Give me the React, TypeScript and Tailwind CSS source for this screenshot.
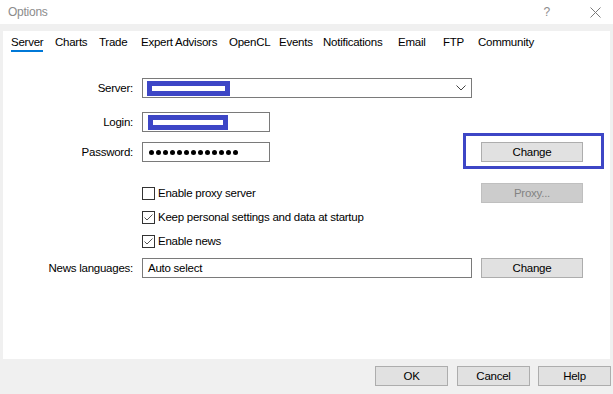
import React from "react";

const tabs = [
  { name: "Server", w: "w-[44px]" },
  { name: "Charts", w: "w-[44px]" },
  { name: "Trade", w: "w-[42px]" },
  { name: "Expert Advisors", w: "w-[88px]" },
  { name: "OpenCL", w: "w-[50px]" },
  { name: "Events", w: "w-[44px]" },
  { name: "Notifications", w: "w-[75px]" },
  { name: "Email", w: "w-[45px]" },
  { name: "FTP", w: "w-[35px]" },
  { name: "Community", w: "w-[80px]" },
];

function Scribble({ w }: { w: string }) {
  // blue redaction mark over the account fields
  return (
    <div className={`${w} h-[15px] border-[5px] border-[#3d46c6] bg-white`} />
  );
}

function Button({
  label,
  w = "w-[102px]",
  disabled = false,
}: {
  label: string;
  w?: string;
  disabled?: boolean;
}) {
  return (
    <div
      className={`${w} h-[20px] flex items-center justify-center border ${
        disabled
          ? "bg-[#cccccc] border-[#bfbfbf] text-[#838383]"
          : "bg-[#e1e1e1] border-[#adadad] text-black"
      }`}
    >
      {label}
    </div>
  );
}

function Checkbox({ checked, label }: { checked: boolean; label: string }) {
  return (
    <div className="flex items-center">
      <div className="w-[13px] h-[13px] border border-[#333333] bg-white flex items-center justify-center">
        {checked && (
          <svg width="11" height="11" viewBox="0 0 11 11">
            <polyline
              points="1.5,5.5 4,8 9.5,2.5"
              fill="none"
              stroke="#555555"
              strokeWidth="1"
            />
          </svg>
        )}
      </div>
      <span className="ml-[3px]">{label}</span>
    </div>
  );
}

export default function App() {
  return (
    <div className="w-[613px] h-[394px] bg-[#f0f0f0] flex flex-col font-['Liberation_Sans',Arial,sans-serif] text-[11.5px] tracking-[-0.25px] text-black leading-[14px] overflow-hidden">
      {/* title bar */}
      <div className="h-[24px] bg-white flex items-center pl-[8px] pr-[12px] text-[#8c8c8c] text-[12px]">
        <span>Options</span>
        <span className="ml-auto mr-[40px]">?</span>
        <svg width="11" height="11" viewBox="0 0 11 11">
          <path d="M0.5 0.5 L10.5 10.5 M10.5 0.5 L0.5 10.5" stroke="#7a7a7a" strokeWidth="1" />
        </svg>
      </div>

      {/* page */}
      <div className="mx-[3px] mt-[7px] h-[328px] bg-white flex flex-col">
        <div className="flex pl-[8px] pt-[4px]">
          {tabs.map((t, i) => (
            <div key={t.name} className={`${t.w} flex flex-col`}>
              <span className="h-[14px] whitespace-nowrap">{t.name}</span>
              {i === 0 ? (
                <div className="mt-[1px] w-[32px] h-[2px] bg-[#0078d7]" />
              ) : (
                <div className="mt-[1px] h-[2px]" />
              )}
            </div>
          ))}
        </div>

        {/* Server */}
        <div className="flex items-center mt-[26px] h-[20px]">
          <div className="w-[139px] text-right pr-[9px]">Server:</div>
          <div className="w-[330px] h-[20px] border border-[#7a7a7a] flex items-center pl-[4px] pr-[5px]">
            <Scribble w="w-[83px]" />
            <svg className="ml-auto" width="10" height="6" viewBox="0 0 10 6">
              <polyline points="0.5,0.5 5,5 9.5,0.5" fill="none" stroke="#444444" strokeWidth="1" />
            </svg>
          </div>
        </div>

        {/* Login */}
        <div className="flex items-center mt-[14px] h-[20px]">
          <div className="w-[139px] text-right pr-[9px]">Login:</div>
          <div className="w-[128px] h-[20px] border border-[#7a7a7a] flex items-center pl-[5px]">
            <Scribble w="w-[80px]" />
          </div>
        </div>

        {/* Password */}
        <div className="flex items-center mt-[10px] h-[20px]">
          <div className="w-[139px] text-right pr-[9px]">Password:</div>
          <div className="w-[128px] h-[20px] border border-[#7a7a7a] flex items-center pl-[6px] gap-[2px]">
            {Array.from({ length: 13 }).map((_, i) => (
              <span key={i} className="w-[5px] h-[5px] rounded-full bg-black" />
            ))}
          </div>
          <div className="ml-[211px] relative">
            <Button label="Change" />
            <div className="absolute left-[-18px] top-[-9px] w-[141px] h-[36px] border-[3px] border-[#3d46c6]" />
          </div>
        </div>

        {/* options */}
        <div className="flex items-center mt-[21px] h-[20px]">
          <div className="w-[139px]" />
          <div className="w-[339px]">
            <Checkbox checked={false} label="Enable proxy server" />
          </div>
          <Button label="Proxy..." disabled />
        </div>
        <div className="flex items-center mt-[4px] h-[20px] pl-[139px]">
          <Checkbox checked label="Keep personal settings and data at startup" />
        </div>
        <div className="flex items-center mt-[4px] h-[20px] pl-[139px]">
          <Checkbox checked label="Enable news" />
        </div>

        {/* News languages */}
        <div className="flex items-center mt-[7px] h-[20px]">
          <div className="w-[139px] text-right pr-[9px]">News languages:</div>
          <div className="w-[330px] h-[20px] border border-[#7a7a7a] flex items-center pl-[5px]">
            Auto select
          </div>
          <div className="ml-[9px]">
            <Button label="Change" />
          </div>
        </div>
      </div>

      {/* dialog buttons */}
      <div className="flex mt-[7px] pl-[375px]">
        <Button label="OK" w="w-[73px]" />
        <div className="ml-[9px]">
          <Button label="Cancel" w="w-[73px]" />
        </div>
        <div className="ml-[8px]">
          <Button label="Help" w="w-[73px]" />
        </div>
      </div>
    </div>
  );
}
